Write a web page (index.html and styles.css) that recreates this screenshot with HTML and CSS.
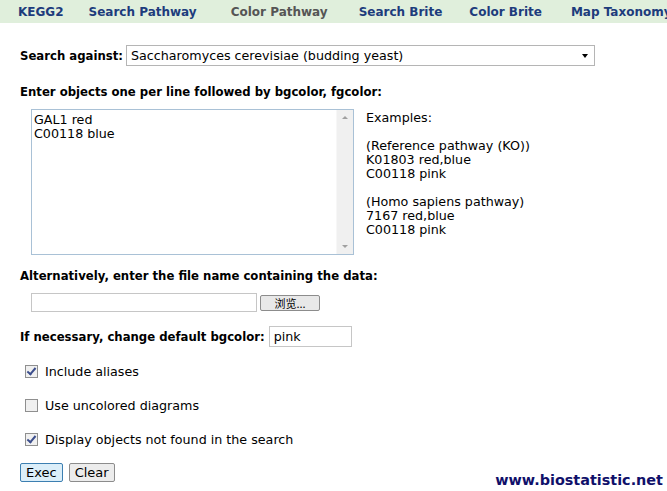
FILE: index.html
```html
<!DOCTYPE html>
<html lang="en">
<head>
    <meta charset="UTF-8">
    <title>Color Pathway</title>
    <link rel="stylesheet" href="styles.css">
</head>
<body>

<div class="nav">
    <a class="nav-item first">KEGG2</a>
    <a class="nav-item">Search Pathway</a>
    <a class="nav-item active">Color Pathway</a>
    <a class="nav-item">Search Brite</a>
    <a class="nav-item">Color Brite</a>
    <a class="nav-item">Map Taxonomy</a>
</div>

<div class="form">
    <div class="row search-row">
        <label class="label">Search against:</label>
        <div class="select">
            <span>Saccharomyces cerevisiae (budding yeast)</span>
            <span class="arrow"></span>
        </div>
    </div>

    <p class="label heading">Enter objects one per line followed by bgcolor, fgcolor:</p>

    <div class="row data-row">
        <div class="textarea">
            <div class="text">GAL1 red<br>C00118 blue</div>
            <div class="scrollbar">
                <span class="up"></span>
                <span class="down"></span>
            </div>
        </div>
        <div class="examples">
            <p>Examples:</p>
            <p>(Reference pathway (KO))<br>K01803 red,blue<br>C00118 pink</p>
            <p>(Homo sapiens pathway)<br>7167 red,blue<br>C00118 pink</p>
        </div>
    </div>

    <p class="label heading alt">Alternatively, enter the file name containing the data:</p>

    <div class="row file-row">
        <div class="file-box"></div>
        <div class="browse">浏览...</div>
    </div>

    <div class="row color-row">
        <label class="label">If necessary, change default bgcolor:</label>
        <div class="color-box">pink</div>
    </div>

    <div class="check"><span class="box checked"></span>Include aliases</div>
    <div class="check"><span class="box"></span>Use uncolored diagrams</div>
    <div class="check"><span class="box checked"></span>Display objects not found in the search</div>

    <div class="row buttons">
        <div class="btn exec">Exec</div>
        <div class="btn">Clear</div>
    </div>
</div>

<div class="watermark">www.biostatistic.net</div>

</body>
</html>
```

FILE: styles.css
```css
body {
    margin: 0;
    font-family: "DejaVu Sans", Verdana, sans-serif;
    font-size: 12.7px;
    color: #000;
    background: #fff;
    width: 667px;
    height: 491px;
    overflow: hidden;
    position: relative;
}
p {
    margin: 0;
}
.nav {
    display: flex;
    height: 23px;
    align-items: center;
    background-color: #e0efdc;
    white-space: nowrap;
}
.nav-item {
    font-weight: bold;
    font-size: 12px;
    color: #1d3c7c;
}
.nav-item.first {
    margin-left: 18px;
    margin-right: 25px;
}
.nav-item:nth-child(2) {
    margin-right: 34px;
}
.nav-item.active {
    color: #555;
    margin-right: 31px;
}
.nav-item:nth-child(4) {
    margin-right: 27px;
}
.nav-item:nth-child(5) {
    margin-right: 29px;
}
.form {
    padding: 22px 0 0 20px;
}
.row {
    display: flex;
    align-items: center;
}
.label {
    font-weight: bold;
    font-size: 11.7px;
}
.search-row .label {
    margin-right: 3px;
}
.select {
    width: 463px;
    height: 19px;
    border: 1px solid #b5b5b5;
    display: flex;
    align-items: center;
    justify-content: space-between;
    padding-left: 4px;
    box-sizing: content-box;
}
.arrow {
    width: 0;
    height: 0;
    border-left: 3px solid transparent;
    border-right: 3px solid transparent;
    border-top: 4px solid #000;
    margin-right: 6px;
}
.heading {
    margin-top: 19px;
}
.data-row {
    align-items: flex-start;
    margin-top: 10px;
}
.textarea {
    margin-left: 11px;
    width: 321px;
    height: 144px;
    border: 1px solid #a9c1d6;
    display: flex;
}
.text {
    flex: 1;
    padding: 3px 2px;
    line-height: 14px;
}
.scrollbar {
    width: 16px;
    background: #f0f0f0;
    border-left: 1px solid #f7f7f7;
    display: flex;
    flex-direction: column;
    justify-content: space-between;
    align-items: center;
    padding: 6px 0;
}
.up, .down {
    width: 0;
    height: 0;
    border-left: 3px solid transparent;
    border-right: 3px solid transparent;
}
.up {
    border-bottom: 3px solid #a0a0a0;
}
.down {
    border-top: 3px solid #a0a0a0;
}
.examples {
    margin-left: 12px;
    line-height: 14px;
    padding-top: 2px;
}
.examples p {
    margin-bottom: 14px;
}
.alt {
    margin-top: 14px;
}
.file-row {
    margin-top: 10px;
    margin-left: 11px;
}
.file-box {
    width: 224px;
    height: 17px;
    border: 1px solid #c6c6c6;
}
.browse {
    margin-left: 3px;
    width: 58px;
    height: 14px;
    border: 1px solid #8c8c8c;
    border-radius: 2px;
    background: #e8e8e8;
    font-size: 11px;
    line-height: 14px;
    text-align: center;
    font-family: "Noto Sans CJK SC", "DejaVu Sans", sans-serif;
}
.color-row {
    margin-top: 14px;
}
.color-box {
    margin-left: 4px;
    width: 77px;
    height: 19px;
    border: 1px solid #c6c6c6;
    padding-left: 4px;
    line-height: 19px;
}
.check {
    display: flex;
    align-items: center;
    margin-top: 15px;
    margin-left: 5px;
    height: 19px;
}
.check + .check {
    margin-top: 15px;
}
.box {
    width: 11px;
    height: 11px;
    border: 1px solid #8f8f8f;
    background: #f0f0f0;
    margin-right: 7px;
    position: relative;
}
.box.checked::after {
    content: "";
    position: absolute;
    left: 3px;
    top: 0px;
    width: 3px;
    height: 7px;
    border-right: 2px solid #3c4e8c;
    border-bottom: 2px solid #3c4e8c;
    transform: rotate(40deg);
}
.buttons {
    margin-top: 14px;
    gap: 6px;
}
.btn {
    height: 17px;
    line-height: 17px;
    padding: 0 5px;
    border: 1px solid #8c8c8c;
    border-radius: 2px;
    background: #ececec;
    font-size: 13px;
}
.btn.exec {
    border-color: #3c7fb1;
    background: #dbeef9;
}
.watermark {
    position: absolute;
    right: 4px;
    bottom: 3px;
    font-family: "DejaVu Sans", Verdana, sans-serif;
    font-weight: bold;
    font-size: 14.4px;
    color: #10106a;
}
```
